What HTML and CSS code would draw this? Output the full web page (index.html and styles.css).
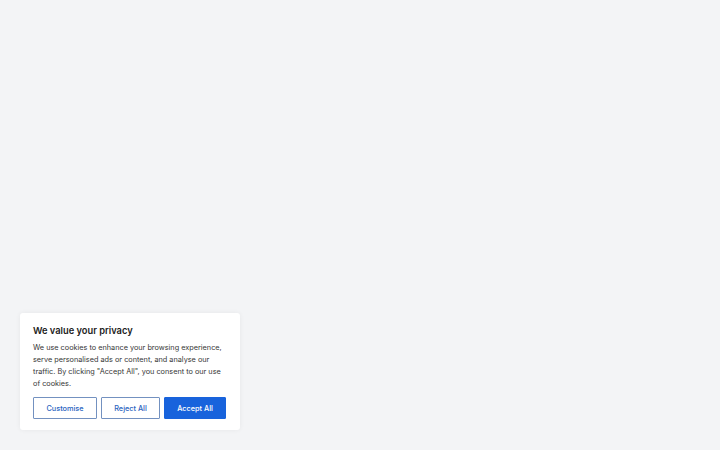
FILE: index.html
```html
<!DOCTYPE html>
<html>
<head>
<meta charset="utf-8">
<link rel="stylesheet" href="styles.css">
</head>
<body>
<div class="consent">
  <p class="title">We value your privacy</p>
  <p class="text">We use cookies to enhance your browsing experience, serve personalised ads or content, and analyse our traffic. By clicking "Accept All", you consent to our use of cookies.</p>
  <div class="buttons">
    <button class="btn outline customise">Customise</button>
    <button class="btn outline reject">Reject All</button>
    <button class="btn solid accept">Accept All</button>
  </div>
</div>
</body>
</html>
```
FILE: styles.css
```css
html, body {
  margin: 0;
  padding: 0;
  width: 720px;
  height: 450px;
  background: #f3f4f6;
  font-family: Inter, "Noto Sans", sans-serif;
  overflow: hidden;
}
.consent {
  position: absolute;
  left: 20px;
  top: 313px;
  width: 220px;
  box-sizing: border-box;
  padding: 11px 13px 11px 13px;
  background: #ffffff;
  border-radius: 3px;
  box-shadow: 0 0 5px rgba(0,0,0,0.06);
}
.title {
  margin: 0 0 4px 0;
  font-size: 9.3px;
  line-height: 14px;
  font-weight: 600;
  color: #212121;
}
.text {
  margin: 0 0 7px 0;
  font-size: 7.3px;
  line-height: 12px;
  color: #363636;
}
.buttons {
  display: flex;
  gap: 4px;
}
.btn {
  height: 22px;
  box-sizing: border-box;
  border: 1px solid #1863dc;
  border-radius: 1px;
  font-family: Inter, "Noto Sans", sans-serif;
  font-size: 7.3px;
  font-weight: 500;
  padding: 0;
  cursor: pointer;
}
.outline {
  background: #ffffff;
  color: #2a64c0;
  border: 1.5px solid #7391c0;
}
.solid {
  background: #1863dc;
  color: #ffffff;
}
.customise { width: 64px; }
.reject { width: 59px; }
.accept { width: 62px; }
```
